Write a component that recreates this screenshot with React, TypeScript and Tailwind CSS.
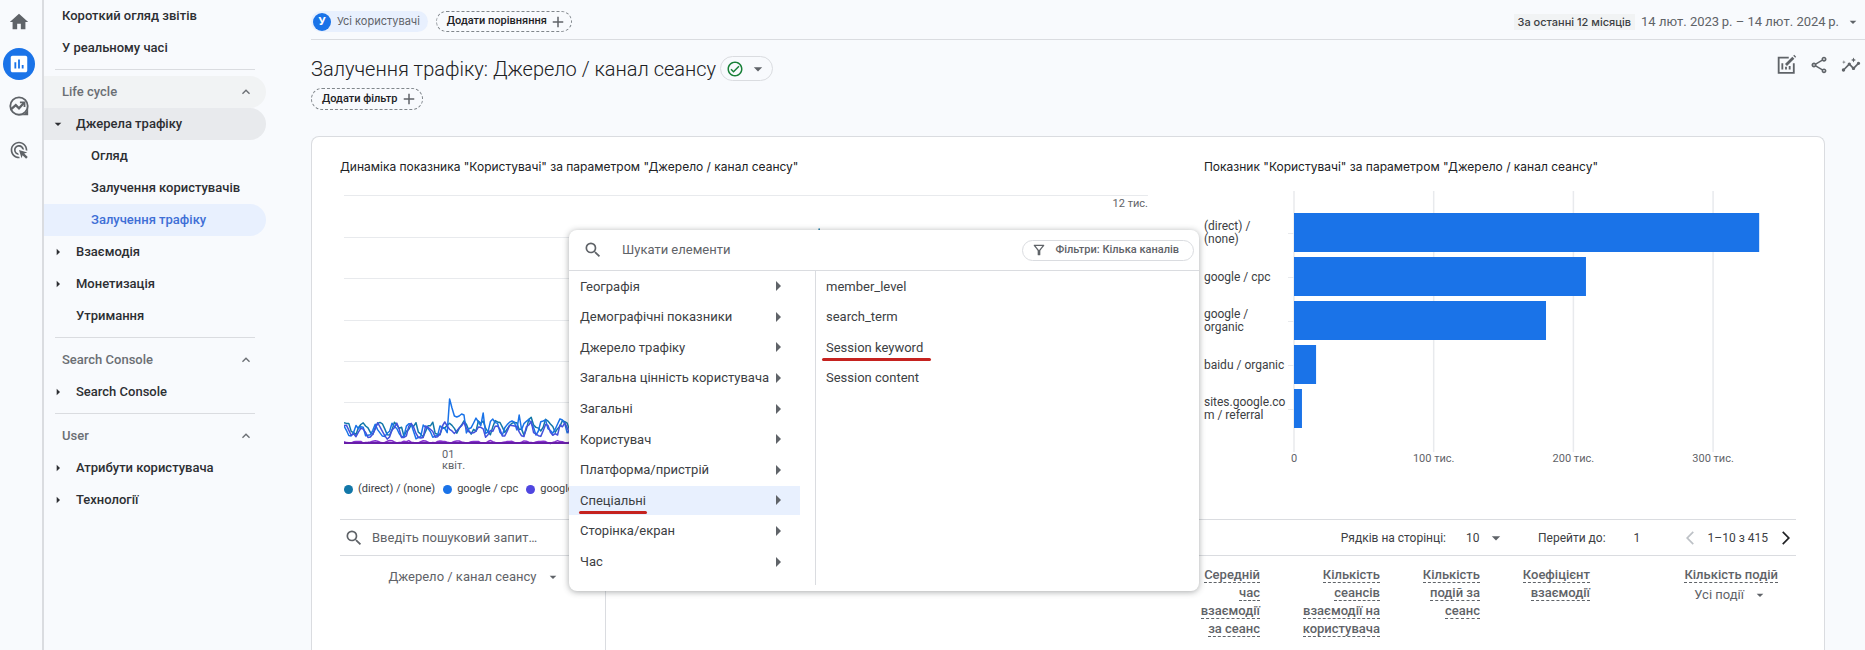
import React, { useState } from 'react';
import {
    MdHome,
    MdInsertChart,
    MdAdsClick,
    MdAdd,
    MdArrowDropDown,
    MdArrowRight,
    MdArrowBackIosNew,
    MdArrowForwardIos,
    MdExpandLess,
    MdInsights,
    MdOutlineCheckCircle,
    MdOutlineFilterAlt,
    MdOutlineShare,
    MdSearch,
} from 'react-icons/md';

interface NavItem {
    label: string;
    level?: 1 | 2;
    state?: 'open' | 'closed';
    active?: boolean;
}

interface NavSection {
    title: string;
    highlighted?: boolean;
    items: NavItem[];
}

const NAV_SECTIONS: NavSection[] = [
    {
        title: 'Life cycle',
        highlighted: true,
        items: [
            { label: 'Джерела трафіку', state: 'open' },
            { label: 'Огляд', level: 2 },
            { label: 'Залучення користувачів', level: 2 },
            { label: 'Залучення трафіку', level: 2, active: true },
            { label: 'Взаємодія', state: 'closed' },
            { label: 'Монетизація', state: 'closed' },
            { label: 'Утримання' },
        ],
    },
    { title: 'Search Console', items: [{ label: 'Search Console', state: 'closed' }] },
    {
        title: 'User',
        items: [
            { label: 'Атрибути користувача', state: 'closed' },
            { label: 'Технології', state: 'closed' },
        ],
    },
];

const CATEGORIES = [
    'Географія',
    'Демографічні показники',
    'Джерело трафіку',
    'Загальна цінність користувача',
    'Загальні',
    'Користувач',
    'Платформа/пристрій',
    'Спеціальні',
    'Сторінка/екран',
    'Час',
];

const DIMENSIONS = ['member_level', 'search_term', 'Session keyword', 'Session content'];

// Values in thousands of users
const AXIS_MAX = 359.4;
const BARS = [
    { label: '(direct) /\n(none)', value: 333 },
    { label: 'google / cpc', value: 209 },
    { label: 'google /\norganic', value: 180.4 },
    { label: 'baidu / organic', value: 15.8 },
    { label: 'sites.google.co\nm / referral', value: 5.7 },
];

const LEGEND = [
    { label: '(direct) / (none)', dot: 'bg-[#1277a8]' },
    { label: 'google / cpc', dot: 'bg-[#1a73e8]' },
    { label: 'google / organic', dot: 'bg-[#4f46e0]' },
];

const METRICS = [
    { label: 'Середній час взаємодії за сеанс', cell: 'w-20' },
    { label: 'Кількість сеансів взаємодії на користувача', cell: 'w-[120px] pl-4' },
    { label: 'Кількість подій за сеанс', cell: 'w-[100px] pl-4' },
    { label: 'Коефіцієнт взаємодії', cell: 'w-[110px] pl-4' },
];

const DAY = 2.4;

// Weekly wave with a bit of repeatable noise, one point per day
const buildSeries = (base: number, amp: number, shift: number, lift = 0, peaks: Record<number, number> = {}) => {
    const points: string[] = [];
    for (let day = 0; day <= 335; day++) {
        const noise = Math.sin(day * 12.9898 + shift * 78.233) * 43758.5453;
        const jitter = (noise - Math.floor(noise) - 0.5) * amp * 1.2;
        const wave = Math.sin((day / 7) * Math.PI * 2 + shift) * amp;
        const y = peaks[day] ?? base - (day > 44 ? lift : 0) - wave + jitter;
        points.push(`${(day * DAY).toFixed(1)},${y.toFixed(1)}`);
    }
    return points.join(' ');
};

const DIRECT = buildSeries(252, 6, 0.6, 3, { 198: 52 });
const CPC = buildSeries(254, 6, 2.2, 5, { 44: 222, 45: 231, 46: 239, 47: 240, 48: 239, 49: 237, 50: 238, 58: 236, 73: 238 });
const ORGANIC = buildSeries(254, 6, 1.2, 1);
const OTHER = buildSeries(265, 1, 3);

const ExploreIcon = () => (
    <svg viewBox="0 0 24 24" className="size-[22px]" fill="none" stroke="currentColor" strokeWidth="2">
        <circle cx="12" cy="12" r="9.5" />
        <path d="M22 12v10H12c6 0 10-4 10-10z" fill="currentColor" stroke="none" />
        <path d="M3.5 15.5l5-4.5 3.5 3.5 5.5-6" strokeWidth="2.5" />
        <path d="M13 8h5v5" />
    </svg>
);

const CustomizeIcon = () => (
    <svg viewBox="0 0 24 24" className="size-[22px]" fill="none" stroke="currentColor" strokeWidth="2">
        <path d="M15 4H4v16.5h16.5V10" />
        <path d="M8 17v-7M12 17v-3M16 17v-4" />
        <path d="M12 12l8-8" strokeWidth="3" />
        <path d="M21 3l1-1" strokeWidth="3" />
    </svg>
);

const Rail = () => (
    <nav className="flex w-11 shrink-0 flex-col items-center border-r-2 border-[#dadce0] pt-2 pr-1 text-[#5f6368]">
        <a href="#home" aria-label="Home" className="flex size-7 items-center justify-center">
            <MdHome className="size-[22px]" />
        </a>
        <a href="#reports" aria-label="Reports" className="mt-3 flex size-8 items-center justify-center rounded-full bg-[#1a73e8] text-white">
            <MdInsertChart className="size-[22px]" />
        </a>
        <a href="#explore" aria-label="Explore" className="mt-3 flex size-7 items-center justify-center">
            <ExploreIcon />
        </a>
        <a href="#ads" aria-label="Advertising" className="mt-4 flex size-7 items-center justify-center">
            <MdAdsClick className="size-5" />
        </a>
    </nav>
);

const NavLink: React.FC<{ item: NavItem }> = ({ item }) => {
    let tone = 'text-[#2d2f33]';
    if (item.active) tone = 'bg-[#e8f0fe] text-[#3f6fd6]';
    if (item.state === 'open') tone = 'bg-[#e8eaed] text-[#2d2f33]';

    return (
        <a href="#report" className={`flex h-8 items-center rounded-r-full ${tone}`}>
            <span className="flex w-8 shrink-0 justify-center pr-1">
                {item.state === 'open' && <MdArrowDropDown className="size-4" />}
                {item.state === 'closed' && <MdArrowRight className="size-4" />}
            </span>
            <span className={item.level === 2 ? 'pl-[15px]' : ''}>{item.label}</span>
        </a>
    );
};

const Sidebar = () => (
    <nav className="w-[222px] shrink-0 font-[Roboto,'Liberation_Sans',sans-serif] text-[13px] font-medium">
        <a href="#snapshot" className="flex h-8 items-center pl-[18px] text-[#2d2f33]">Короткий огляд звітів</a>
        <a href="#realtime" className="flex h-8 items-center pl-[18px] text-[#2d2f33]">У реальному часі</a>
        {NAV_SECTIONS.map((section) => (
            <div key={section.title}>
                <hr className="mx-[11px] mt-[5px] mb-1.5 border-[#dadce0]" />
                <button
                    className={`flex h-8 w-full items-center justify-between rounded-r-full pr-3 pl-[18px] text-[#6b6f74] ${section.highlighted ? 'bg-[#f1f3f4]' : ''}`}
                >
                    {section.title}
                    <MdExpandLess className="size-4" />
                </button>
                {section.items.map((item) => (
                    <NavLink key={item.label} item={item} />
                ))}
            </div>
        ))}
    </nav>
);

const TopBar = () => (
    <header className="flex h-10 shrink-0 items-start border-b border-[#dadce0] pt-[11px] font-[Roboto,'Liberation_Sans',sans-serif]">
        <button className="flex h-[21px] items-center gap-1.5 rounded-full bg-[#e8f0fe] pr-2 pl-0.5 font-[Inter,'Liberation_Sans',sans-serif] text-[11px] text-[#5f6368]">
            <span className="flex size-[18px] items-center justify-center rounded-full bg-[#1a73e8] font-bold text-white">У</span>
            Усі користувачі
        </button>
        <button className="ml-2 flex h-[21px] items-center gap-0.5 rounded-full border border-dashed border-[#80868b] pr-1 pl-2.5 text-[11px] font-medium text-[#202124]">
            Додати порівняння
            <MdAdd className="size-[18px] text-[#5f6368]" />
        </button>
        <button className="mr-1 ml-auto flex h-[21px] items-center text-[13px] text-[#5f6368]">
            <span className="mr-1.5 bg-[#f1f3f4] px-1 font-[Inter,'Liberation_Sans',sans-serif] text-[11px] leading-4 font-medium text-[#3c4043]">За останні 12 місяців</span>
            14 лют. 2023&thinsp;р. – 14 лют. 2024&thinsp;р.
            <MdArrowDropDown className="ml-1.5 size-4" />
        </button>
    </header>
);

const TitleBar = () => (
    <div className="flex shrink-0 items-start font-[Roboto,'Liberation_Sans',sans-serif]">
        <div className="flex-1">
            <div className="mt-4 flex h-[25px] items-center gap-1">
                <h1 className="text-xl font-light text-[#202124]">Залучення трафіку: Джерело / канал сеансу</h1>
                <button aria-label="Status" className="flex h-[25px] items-center gap-1 rounded-full border border-[#dadce0] pr-1 pl-[5px] text-[#5f6368]">
                    <MdOutlineCheckCircle className="size-[18px] text-[#188038]" />
                    <MdArrowDropDown className="size-5" />
                </button>
            </div>
            <button className="mt-[7px] flex h-[22px] items-center gap-0.5 rounded-full border border-dashed border-[#80868b] pr-1 pl-2.5 text-[11px] font-medium text-[#202124]">
                Додати фільтр
                <MdAdd className="size-[18px] text-[#5f6368]" />
            </button>
        </div>
        <div className="mt-[14px] mr-1 flex items-center gap-3 text-[#5f6368]">
            <button aria-label="Customize"><CustomizeIcon /></button>
            <button aria-label="Share"><MdOutlineShare className="size-5" /></button>
            <button aria-label="Insights"><MdInsights className="size-5" /></button>
        </div>
    </div>
);

const LineChart = () => (
    <div className="px-1">
        <svg width="100%" height="300" className="block text-[11px]" fill="#5f6368">
            {[18, 60, 101, 143, 184, 225].map((y) => (
                <line key={y} x1="0" x2="100%" y1={y + 0.5} y2={y + 0.5} stroke="#e8eaed" />
            ))}
            <text x="100%" y="30" textAnchor="end">12 тис.</text>
            <svg width="100%" height="300" viewBox="0 0 804 300" preserveAspectRatio="none" fill="none" strokeWidth="1.5" strokeLinejoin="round">
                <polyline points={DIRECT} stroke="#1277a8" />
                <polyline points={CPC} stroke="#1a73e8" />
                <polyline points={ORGANIC} stroke="#4352dc" />
                <polyline points={OTHER} stroke="#8430ce" />
                <line x1="0" x2="804" y1="266" y2="266" stroke="#681da8" strokeWidth="2" />
            </svg>
            <text x="12.2%" y="281">01</text>
            <text x="12.2%" y="292">квіт.</text>
        </svg>
        <ul className="mt-0.5 flex h-5 items-center gap-2 text-[11px] text-[#3c4043]">
            {LEGEND.map((entry) => (
                <li key={entry.label} className="flex items-center gap-[5px]">
                    <span className={`size-[9px] rounded-full ${entry.dot}`} />
                    {entry.label}
                </li>
            ))}
        </ul>
    </div>
);

const BarChart = () => (
    <div className="flex">
        <ul className="w-[90px] shrink-0 pt-[34px] text-[12px] leading-[13px] text-[#3c4043]">
            {BARS.map((bar) => (
                <li key={bar.label} className="flex h-11 items-center whitespace-pre-line">{bar.label}</li>
            ))}
        </ul>
        <svg width="100%" height="300" className="block min-w-0 flex-1 overflow-visible text-[11px]" fill="#5f6368">
            {[0, 100, 200, 300].map((tick) => (
                <g key={tick}>
                    <line x1={`${(tick / AXIS_MAX) * 100}%`} x2={`${(tick / AXIS_MAX) * 100}%`} y1="14" y2="275" stroke="#e8eaed" strokeWidth="1.5" />
                    <text x={`${(tick / AXIS_MAX) * 100}%`} y="285" textAnchor="middle">{tick === 0 ? '0' : `${tick} тис.`}</text>
                </g>
            ))}
            {BARS.map((bar, i) => (
                <g key={bar.label}>
                    <line x1="-6" x2="0" y1={56.5 + i * 44} y2={56.5 + i * 44} stroke="#e8eaed" />
                    <rect x="0" y={36 + i * 44} width={`${(bar.value / AXIS_MAX) * 100}%`} height="39" fill="#1a73e8" />
                </g>
            ))}
        </svg>
    </div>
);

const TableSection = () => {
    const [page, setPage] = useState('1');

    return (
        <div className="font-[Roboto,'Liberation_Sans',sans-serif]">
            <div className="flex h-[37px] items-center border-y border-[#dadce0] text-[12px] text-[#3c4043]">
                <label className="flex items-center gap-2 pl-1 text-[#5f6368]">
                    <MdSearch className="size-5" />
                    <input type="text" aria-label="Search" placeholder="Введіть пошуковий запит…" className="w-52 text-[13px] outline-none placeholder:text-[#5f6368]" />
                </label>
                <label className="ml-auto flex items-center">
                    Рядків на сторінці:
                    <span className="ml-5 flex items-center">
                        <select className="appearance-none outline-none" defaultValue="10">
                            <option>10</option>
                            <option>25</option>
                        </select>
                        <MdArrowDropDown className="ml-1.5 size-5 text-[#5f6368]" />
                    </span>
                </label>
                <label className="ml-8 flex items-center">
                    Перейти до:
                    <input className="ml-7 w-8 outline-none" value={page} onChange={(e) => setPage(e.target.value)} />
                </label>
                <button aria-label="Previous page" className="ml-4 text-[#bdc1c6]"><MdArrowBackIosNew className="size-4" /></button>
                <span className="mx-2.5">1–10 з 415</span>
                <button aria-label="Next page" className="mr-0.5 text-[#202124]"><MdArrowForwardIos className="size-4" /></button>
            </div>
            <table className="h-24 w-full table-fixed text-[#5f6368]">
                <thead>
                    <tr className="align-top text-right text-[13px] leading-[18px]">
                        <th className="w-[265px] border-r border-[#dadce0] pt-3 pr-11 text-right font-normal">
                            <button className="inline-flex items-center gap-2">
                                Джерело / канал сеансу
                                <MdArrowDropDown className="size-4" />
                            </button>
                        </th>
                        <th aria-label="Показники" />
                        {METRICS.map((metric) => (
                            <th key={metric.label} className={`pt-2.5 pr-4 text-right font-medium ${metric.cell}`}>
                                <span className="border-b border-dashed border-[#5f6368]">{metric.label}</span>
                            </th>
                        ))}
                        <th className="w-[190px] pt-2.5 pr-[18px] text-right font-medium">
                            <span className="border-b border-dashed border-[#5f6368]">Кількість подій</span>
                            <button className="mt-0.5 mr-2.5 ml-auto flex items-center gap-2 font-normal">
                                Усі події
                                <MdArrowDropDown className="size-4" />
                            </button>
                        </th>
                    </tr>
                </thead>
            </table>
        </div>
    );
};

const DimensionPicker = () => {
    const [selected, setSelected] = useState('Спеціальні');

    return (
        <div className="absolute top-[230px] left-[258px] w-[630px] rounded-lg bg-white font-[Roboto,'Liberation_Sans',sans-serif] text-[13px] text-[#3c4043] shadow-[0_1px_6px_rgba(60,64,67,0.45)]">
            <div className="flex h-[41px] items-center border-b border-[#dadce0] pr-[5px] pl-3.5 text-[#5f6368]">
                <MdSearch className="size-5" />
                <input type="text" aria-label="Search items" placeholder="Шукати елементи" className="ml-[19px] min-w-0 flex-1 text-[13px] outline-none placeholder:text-[#5f6368]" />
                <button className="flex h-[21px] items-center gap-2 rounded-full border border-[#dadce0] pr-3.5 pl-2 text-[11px] font-medium">
                    <MdOutlineFilterAlt className="size-4" />
                    Фільтри: Кілька каналів
                </button>
            </div>
            <div className="flex pb-1.5">
                <ul className="grid h-[306px] w-[231px] grid-cols-1 grid-rows-10 items-center">
                    {CATEGORIES.map((name) => (
                        <li key={name}>
                            <button
                                onClick={() => setSelected(name)}
                                className={`flex h-[29px] w-full items-center justify-between pr-2.5 pl-[11px] whitespace-nowrap ${selected === name ? 'bg-[#e8f0fe]' : ''}`}
                            >
                                <span className="relative min-w-0">
                                    {name}
                                    {name === 'Спеціальні' && <span className="absolute -inset-x-px -bottom-1 h-[3px] rounded-full bg-[#c5221f]" />}
                                </span>
                                <MdArrowRight className="size-6 shrink-0 text-[#5f6368]" />
                            </button>
                        </li>
                    ))}
                </ul>
                <div className="ml-[15px] h-[314px] border-l border-[#dadce0]">
                    <ul className="grid h-[306px] grid-rows-10 items-center pl-2.5">
                        {DIMENSIONS.map((name) => (
                            <li key={name}>
                                <button className="relative">
                                    {name}
                                    {name === 'Session keyword' && <span className="absolute -right-2 -bottom-1 -left-1 h-[3px] rounded-full bg-[#c5221f]" />}
                                </button>
                            </li>
                        ))}
                    </ul>
                </div>
            </div>
        </div>
    );
};

const App = () => (
    <div className="flex h-screen overflow-hidden bg-[#f8fafd] font-[Inter,'Liberation_Sans',sans-serif]">
        <Rail />
        <Sidebar />
        <main className="relative ml-[45px] flex min-w-0 flex-1 flex-col">
            <TopBar />
            <TitleBar />
            <section className="mt-[26px] mr-10 flex-1 rounded-t-lg border border-b-0 border-[#dadce0] bg-white px-7 pt-5">
                <div className="grid h-[362px] grid-cols-[48fr_35fr] gap-13">
                    <div>
                        <h2 className="text-[12px] leading-5 text-[#202124]">Динаміка показника "Користувачі" за параметром "Джерело / канал сеансу"</h2>
                        <div className="font-[Roboto,'Liberation_Sans',sans-serif]"><LineChart /></div>
                    </div>
                    <div>
                        <h2 className="text-[12px] leading-5 text-[#202124]">Показник "Користувачі" за параметром "Джерело / канал сеансу"</h2>
                        <div className="font-[Roboto,'Liberation_Sans',sans-serif]"><BarChart /></div>
                    </div>
                </div>
                <TableSection />
            </section>
            <DimensionPicker />
        </main>
    </div>
);

export default App;
